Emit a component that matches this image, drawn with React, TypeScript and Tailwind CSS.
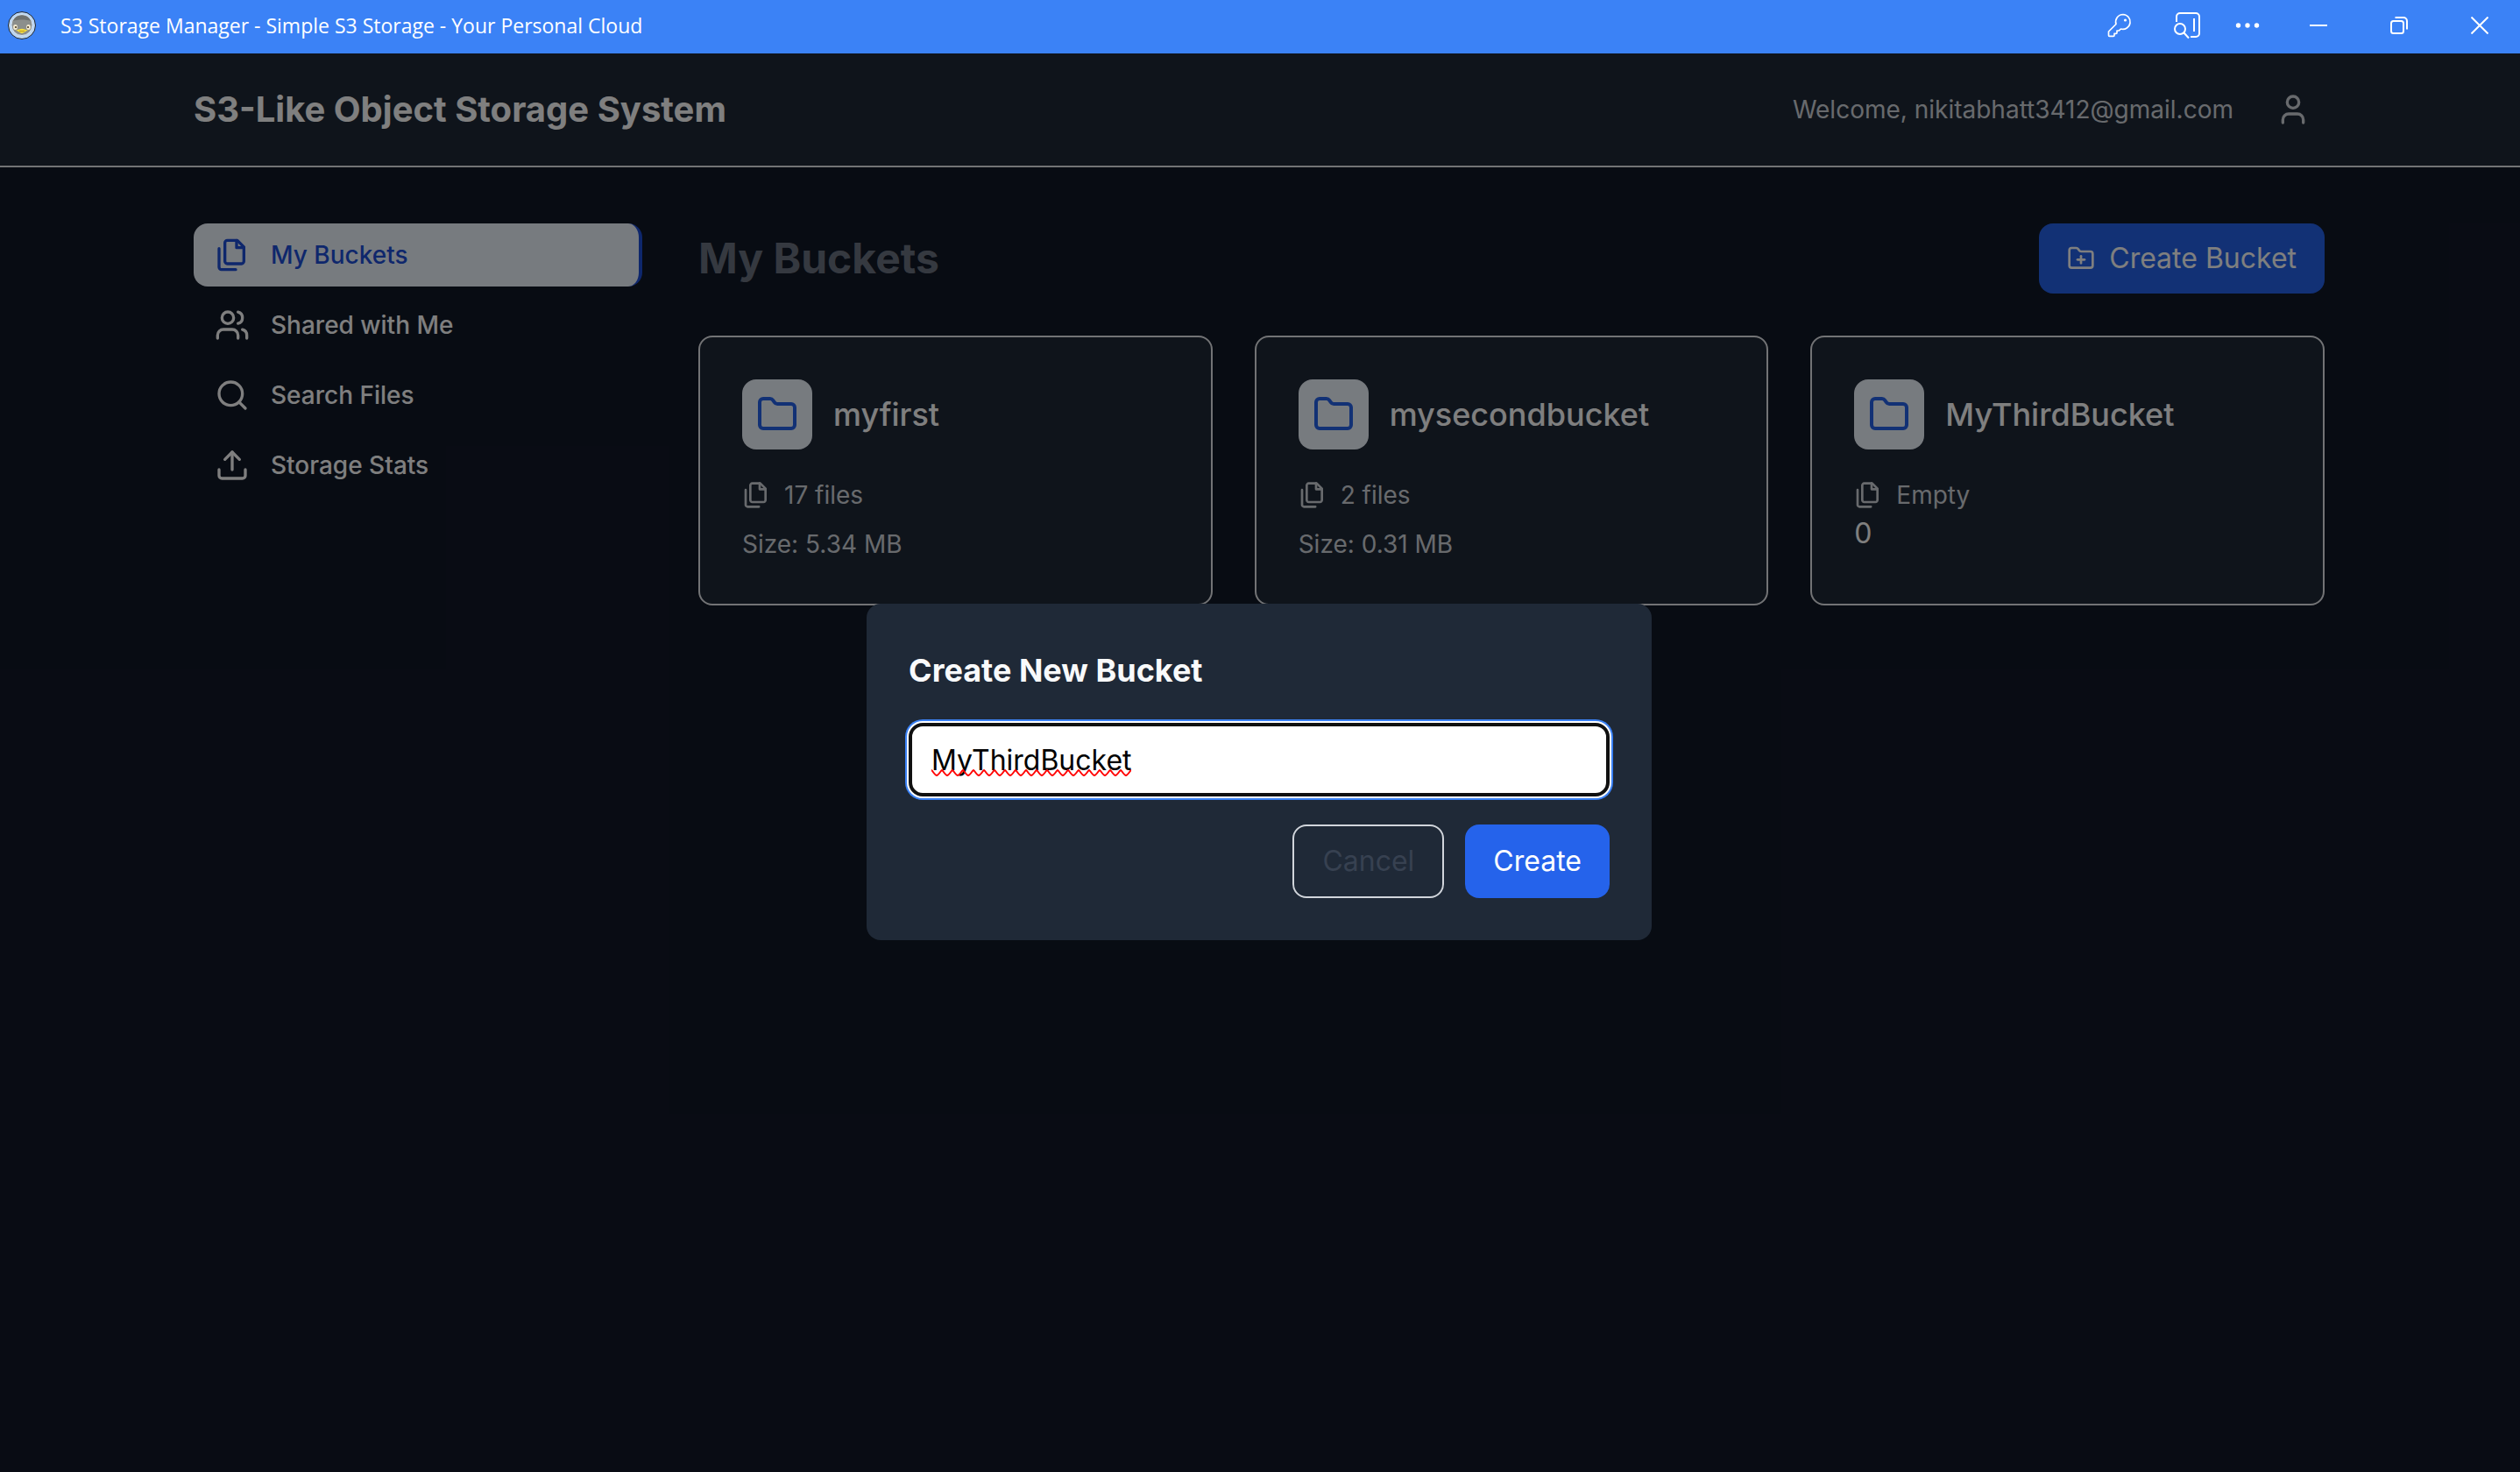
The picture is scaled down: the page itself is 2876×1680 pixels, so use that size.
import { useState } from "react";
import type { ReactNode } from "react";

type IconProps = { className?: string; children?: ReactNode };

function Icon({ className, children }: IconProps) {
  return (
    <svg
      viewBox="0 0 24 24"
      fill="none"
      stroke="currentColor"
      strokeWidth="2"
      strokeLinecap="round"
      strokeLinejoin="round"
      aria-hidden="true"
      className={className}
    >
      {children}
    </svg>
  );
}

const FilesIcon = ({ className }: IconProps) => (
  <Icon className={className}>
    <path d="M15.5 2H8.6c-.4 0-.8.2-1.1.5-.3.3-.5.7-.5 1.1v12.8c0 .4.2.8.5 1.1.3.3.7.5 1.1.5h9.8c.4 0 .8-.2 1.1-.5.3-.3.5-.7.5-1.1V6.5L15.5 2z" />
    <path d="M3 7.6v12.8c0 .4.2.8.5 1.1.3.3.7.5 1.1.5h9.8" />
    <path d="M15 2v5h5" />
  </Icon>
);

const UsersIcon = ({ className }: IconProps) => (
  <Icon className={className}>
    <path d="M16 21v-2a4 4 0 0 0-4-4H6a4 4 0 0 0-4 4v2" />
    <circle cx="9" cy="7" r="4" />
    <path d="M22 21v-2a4 4 0 0 0-3-3.87" />
    <path d="M16 3.13a4 4 0 0 1 0 7.75" />
  </Icon>
);

const SearchIcon = ({ className }: IconProps) => (
  <Icon className={className}>
    <circle cx="11" cy="11" r="8" />
    <path d="m21 21-4.3-4.3" />
  </Icon>
);

const UploadIcon = ({ className }: IconProps) => (
  <Icon className={className}>
    <path d="M21 15v4a2 2 0 0 1-2 2H5a2 2 0 0 1-2-2v-4" />
    <path d="m17 8-5-5-5 5" />
    <path d="M12 3v12" />
  </Icon>
);

const UserIcon = ({ className }: IconProps) => (
  <Icon className={className}>
    <path d="M19 21v-2a4 4 0 0 0-4-4H9a4 4 0 0 0-4 4v2" />
    <circle cx="12" cy="7" r="4" />
  </Icon>
);

const folderPath =
  "M20 20a2 2 0 0 0 2-2V8a2 2 0 0 0-2-2h-7.9a2 2 0 0 1-1.69-.9L9.6 3.9A2 2 0 0 0 7.93 3H4a2 2 0 0 0-2 2v13a2 2 0 0 0 2 2Z";

const FolderIcon = ({ className }: IconProps) => (
  <Icon className={className}>
    <path d={folderPath} />
  </Icon>
);

const FolderPlusIcon = ({ className }: IconProps) => (
  <Icon className={className}>
    <path d="M12 10v6" />
    <path d="M9 13h6" />
    <path d={folderPath} />
  </Icon>
);

function AppLogo() {
  return (
    <svg viewBox="0 0 32 32" className="size-8" aria-hidden="true">
      <circle cx="16" cy="16" r="15.5" fill="#bcd6f2" stroke="#1c2430" strokeWidth="1" />
      <circle cx="16" cy="15.5" r="12" fill="#8c8f8c" stroke="#d4e4f4" strokeWidth="1" />
      <path d="M6 11a11 11 0 0 1 20 0c-5-2-15-2-20 0z" fill="#6e716f" />
      <ellipse cx="8.5" cy="18" rx="2.4" ry="3" fill="#f3ead0" />
      <ellipse cx="23.5" cy="18" rx="2.4" ry="3" fill="#f3ead0" />
      <circle cx="9" cy="18" r="1.1" fill="#4a3b22" />
      <circle cx="23" cy="18" r="1.1" fill="#4a3b22" />
      <path d="M9 21.500c3-.4 5-1.800 7-1.800s4 1.400 7 1.800c-2.500.6-4 2.800-7 3.500-3-.7-4.500-2.900-7-3.500z" fill="#f4dc3c" />
      <path d="M13 22.500h6" stroke="#b08a1c" strokeWidth=".8" />
    </svg>
  );
}

const barButton = "flex h-full items-center justify-center";

function TitleBar() {
  return (
    <div className="flex h-[61px] shrink-0 items-center bg-[#3b82f6] text-white">
      <div className="flex items-center gap-7 pb-[3px] pl-[9px]">
        <AppLogo />
        <span className="font-['Open_Sans','Noto_Sans',sans-serif] text-[23px] leading-8">
          S3 Storage Manager - Simple S3 Storage - Your Personal Cloud
        </span>
      </div>
      <div className="ml-auto flex h-full items-center pb-[3px]">
        <button type="button" aria-label="Passwords" className={`${barButton} w-[86px]`}>
          <svg viewBox="0 0 28 28" fill="none" stroke="currentColor" strokeWidth="1.7" strokeLinejoin="round" className="size-7">
            <path d="M18 1.500a8.400 8.400 0 0 0-8 11L1.500 21v4.300a1 1 0 0 0 1 1H7a1 1 0 0 0 1-1V23.300h2a1 1 0 0 0 1-1V20h2a1 1 0 0 0 .7-.3l1.800-1.700A8.400 8.400 0 1 0 18 1.500z" />
            <circle cx="20.5" cy="8" r="1.6" fill="currentColor" stroke="none" />
          </svg>
        </button>
        <button type="button" aria-label="Search in sidebar" className={`${barButton} w-[68px]`}>
          <svg viewBox="0 0 32 32" fill="none" stroke="currentColor" strokeWidth="2" className="size-8">
            <path d="M4 12V6a4 4 0 0 1 4-4h18a4 4 0 0 1 4 4v19a4 4 0 0 1-4 4h-6" />
            <path d="M24 8v15" />
            <circle cx="8" cy="20" r="6" />
            <path d="M12.5 24.5 18 30.5" />
          </svg>
        </button>
        <button type="button" aria-label="More options" className={`${barButton} w-[70px]`}>
          <svg viewBox="0 0 28 6" fill="currentColor" className="h-[6px] w-7">
            <circle cx="3.5" cy="3" r="2.7" />
            <circle cx="14" cy="3" r="2.7" />
            <circle cx="24.5" cy="3" r="2.7" />
          </svg>
        </button>
        <button type="button" aria-label="Minimize" className={`${barButton} w-[92px]`}>
          <svg viewBox="0 0 20 20" stroke="currentColor" strokeWidth="2" className="size-5">
            <path d="M0 10h20" />
          </svg>
        </button>
        <button type="button" aria-label="Restore" className={`${barButton} w-[92px]`}>
          <svg viewBox="0 0 20 20" fill="none" stroke="currentColor" strokeWidth="2" className="size-5">
            <rect x="1" y="5" width="14" height="14" rx="2.5" />
            <path d="M5.5 1H15a4 4 0 0 1 4 4v9.5" />
          </svg>
        </button>
        <button type="button" aria-label="Close" className={`${barButton} w-[92px]`}>
          <svg viewBox="0 0 20 20" stroke="currentColor" strokeWidth="2" className="size-5">
            <path d="M.5.5l19 19M19.5.5l-19 19" />
          </svg>
        </button>
      </div>
    </div>
  );
}

const navItems = [
  { label: "My Buckets", icon: FilesIcon, active: true },
  { label: "Shared with Me", icon: UsersIcon, active: false },
  { label: "Search Files", icon: SearchIcon, active: false },
  { label: "Storage Stats", icon: UploadIcon, active: false },
];

const buckets = [
  { name: "myfirst", files: "17 files", size: "Size: 5.34 MB" },
  { name: "mysecondbucket", files: "2 files", size: "Size: 0.31 MB" },
  { name: "MyThirdBucket", files: "Empty", size: null },
];

function Header() {
  return (
    <header className="border-b-2 border-[#e5e7eb] bg-[#1f2937] pr-0.5">
      <div className="mx-auto flex h-32 max-w-[2560px] items-center justify-between px-16">
        <h1 className="text-[40px] leading-[56px] font-bold text-white">S3-Like Object Storage System</h1>
        <div className="flex items-center gap-8">
          <span className="text-[28px] leading-10 text-[#d1d5db]">Welcome, nikitabhatt3412@gmail.com</span>
          <button type="button" aria-label="Account" className="p-4 text-[#d1d5db]">
            <UserIcon className="size-10" />
          </button>
        </div>
      </div>
    </header>
  );
}

function Sidebar() {
  return (
    <nav className="flex w-[512px] shrink-0 flex-col gap-2">
      {navItems.map(({ label, icon: NavIcon, active }) => (
        <a
          key={label}
          href="#"
          className={
            active
              ? "flex items-center gap-6 rounded-2xl border-r-4 border-[#1d4ed8] bg-[#eff6ff] px-6 py-4 text-[28px] leading-10 font-medium text-[#1d4ed8]"
              : "flex items-center gap-6 rounded-2xl px-6 py-4 text-[28px] leading-10 font-medium text-white"
          }
        >
          <NavIcon className="size-10" />
          {label}
        </a>
      ))}
    </nav>
  );
}

function BucketCard({ name, files, size }: (typeof buckets)[number]) {
  return (
    <article className="rounded-2xl border-2 border-[#e5e7eb] bg-[#1f2937] p-12">
      <div className="flex items-center gap-6">
        <div className="rounded-2xl bg-[#eff6ff] p-4 text-[#2563eb]">
          <FolderIcon className="size-12" />
        </div>
        <h3 className="text-[36px] leading-[56px] font-medium text-white">{name}</h3>
      </div>
      <div className="mt-8 flex items-center gap-4 text-[28px] leading-10 text-[#d1d5db]">
        <FilesIcon className="size-8" />
        {files}
      </div>
      {size ? (
        <p className="mt-4 text-[28px] leading-10 text-[#d1d5db]">{size}</p>
      ) : (
        <p className="text-[32px] leading-[48px] text-white">0</p>
      )}
    </article>
  );
}

function CreateBucketDialog() {
  const [name, setName] = useState("MyThirdBucket");
  return (
    <div className="absolute inset-0 flex items-center justify-center bg-black/50 pt-[21px] pr-0.5">
      <form
        role="dialog"
        aria-labelledby="dialog-title"
        onSubmit={(event) => event.preventDefault()}
        className="w-full max-w-[896px] rounded-2xl bg-[#1f2937] p-12"
      >
        <h2 id="dialog-title" className="mb-8 text-[36px] leading-[56px] font-bold text-[#f9fafb]">
          Create New Bucket
        </h2>
        <div className="relative mb-8">
          <input
            type="text"
            aria-label="Bucket name"
            spellCheck={false}
            value={name}
            onChange={(event) => setName(event.target.value)}
            className="block h-[84px] w-full rounded-2xl border-4 border-[#101010] bg-white px-[22px] text-[32px] leading-[48px] text-black shadow-[0_0_0_2px_#ffffff,0_0_0_4px_#3b82f6] outline-none"
          />
          <svg className="pointer-events-none absolute top-[53px] left-[26px] h-2 w-[228px]" aria-hidden="true">
            <defs>
              <pattern id="squiggle" width="12" height="8" patternUnits="userSpaceOnUse">
                <path d="M-2-1 0 1c2 1.5 4 6 6 6s4-4.500 6-6l2-2" fill="none" stroke="#ff0000" strokeWidth="2" />
              </pattern>
            </defs>
            <rect width="228" height="8" fill="url(#squiggle)" />
          </svg>
        </div>
        <div className="flex justify-end gap-6">
          <button
            type="button"
            className="rounded-2xl border-2 border-[#d1d5db] px-8 py-4 text-[32px] leading-[48px] text-[#374151]"
          >
            Cancel
          </button>
          <button type="submit" className="rounded-2xl bg-[#2563eb] px-8 py-4 text-[32px] leading-[48px] text-white">
            Create
          </button>
        </div>
      </form>
    </div>
  );
}

export default function App() {
  return (
    <div className="flex min-h-screen flex-col bg-[#111827] font-['Inter',sans-serif]">
      <TitleBar />
      <div className="relative flex-1">
        <Header />
        <div className="pr-0.5">
          <main className="mx-auto flex max-w-[2560px] gap-16 p-16">
            <Sidebar />
            <section className="flex-1">
              <div className="mb-12 flex items-center justify-between">
                <h2 className="text-[48px] leading-[64px] font-bold text-[#6b7280]">My Buckets</h2>
                <button
                  type="button"
                  className="flex items-center gap-4 rounded-2xl bg-[#2563eb] px-8 py-4 text-[32px] leading-[48px] text-white"
                >
                  <FolderPlusIcon className="size-8" />
                  Create Bucket
                </button>
              </div>
              <div className="grid grid-cols-3 gap-12">
                {buckets.map((bucket) => (
                  <BucketCard key={bucket.name} {...bucket} />
                ))}
              </div>
            </section>
          </main>
        </div>
        <CreateBucketDialog />
      </div>
    </div>
  );
}
